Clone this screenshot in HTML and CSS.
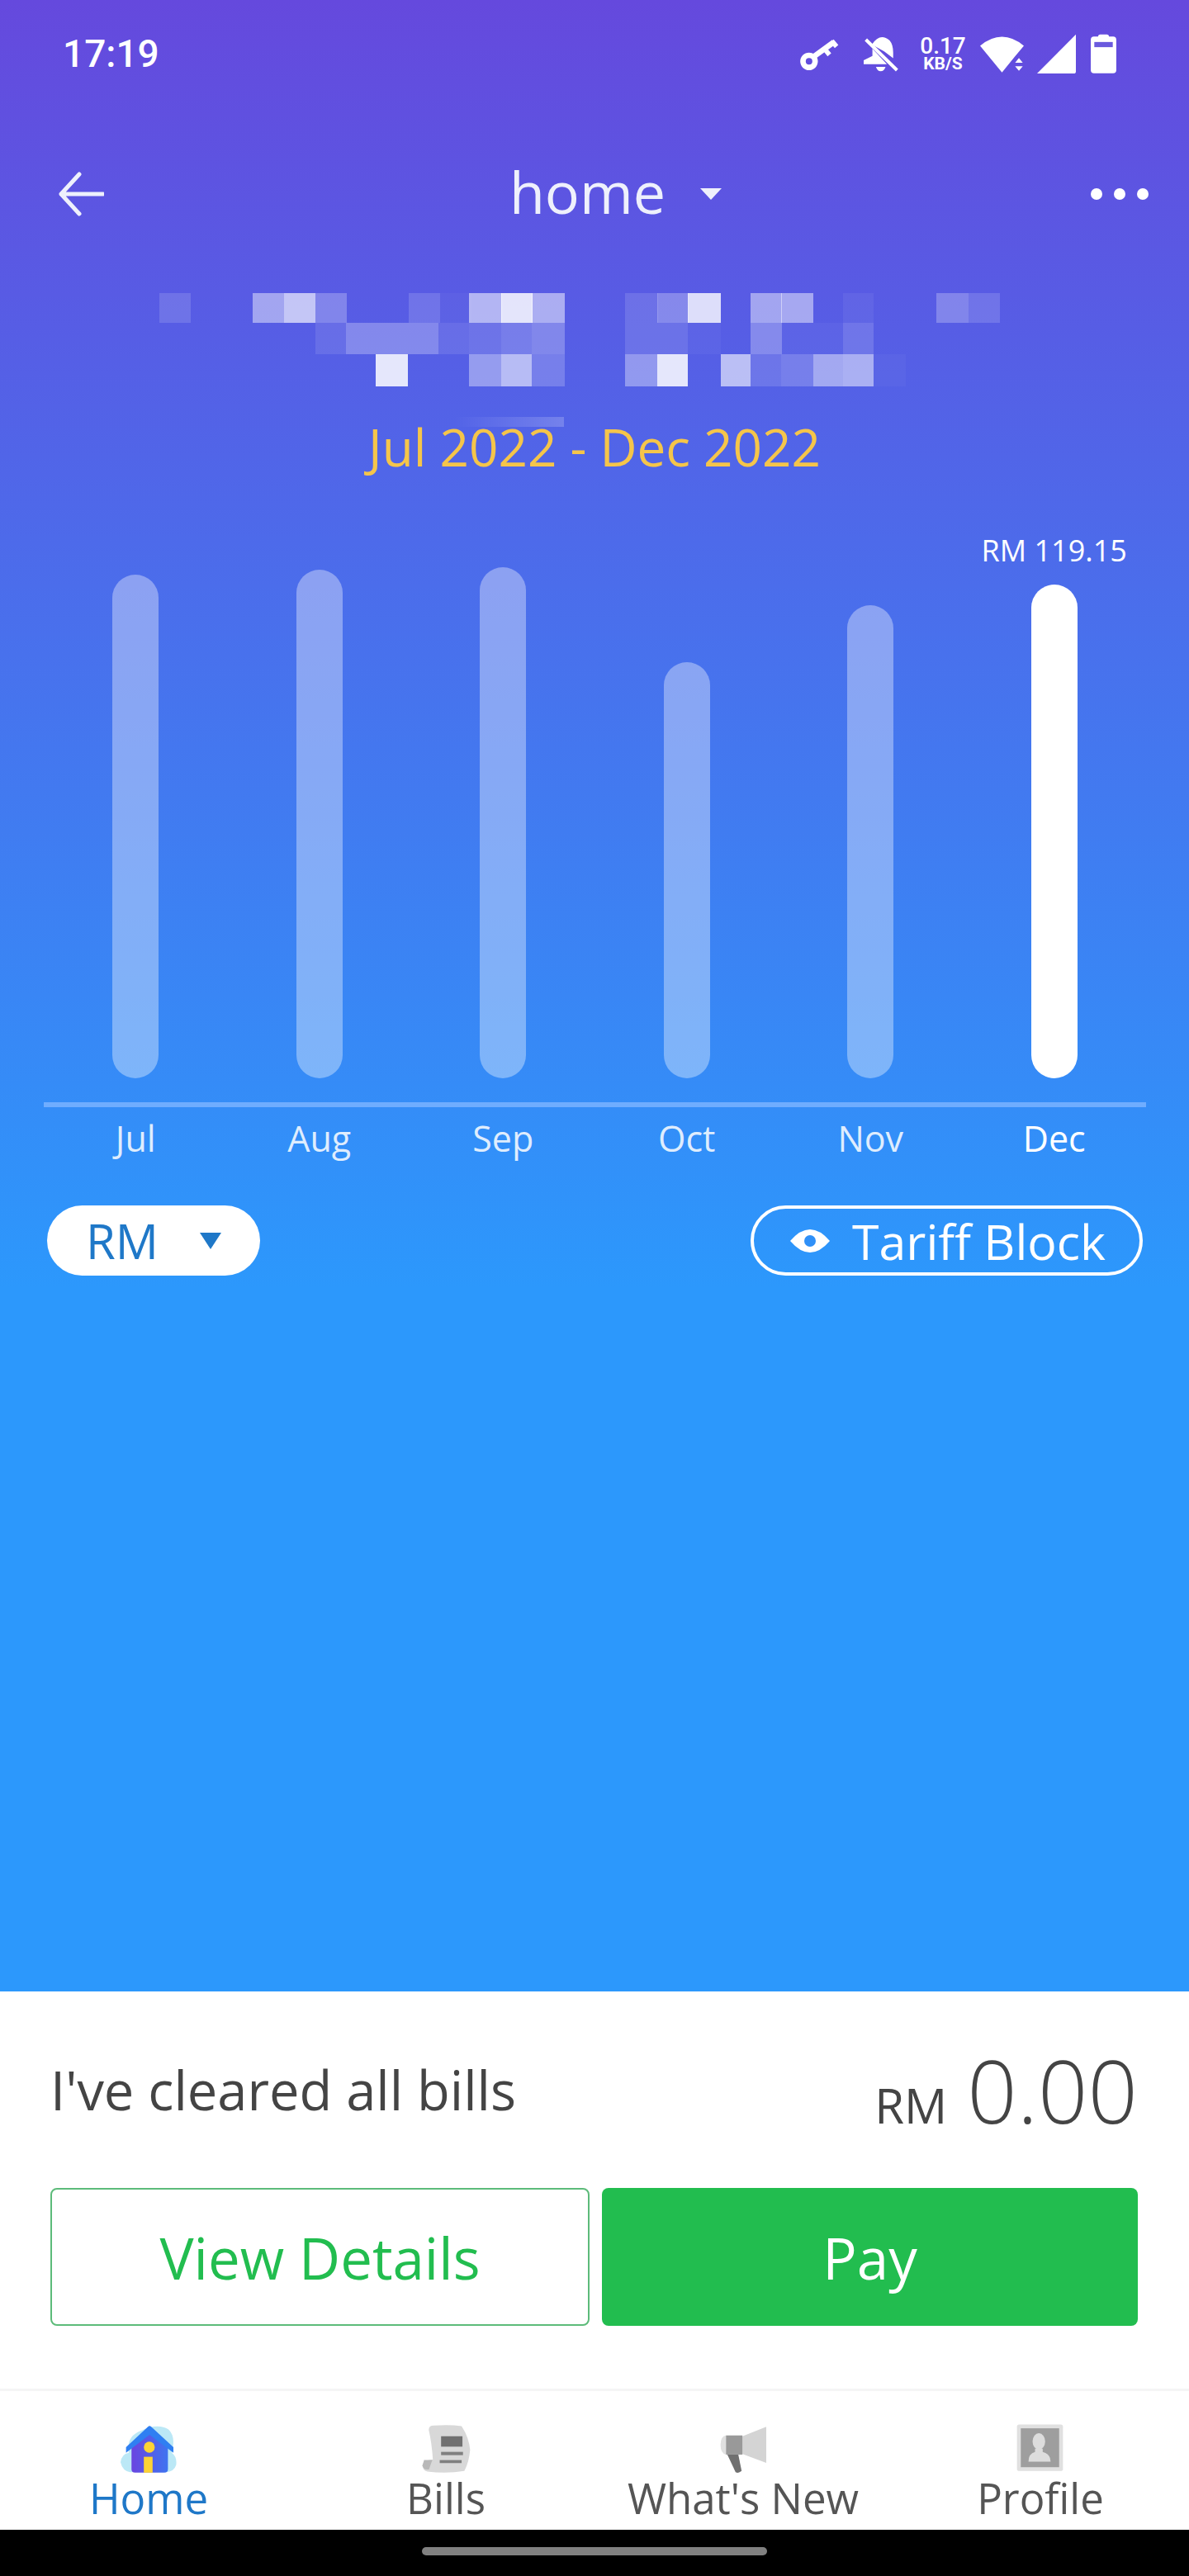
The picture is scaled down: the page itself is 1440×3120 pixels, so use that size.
FILE: index.html
```html
<!DOCTYPE html>
<html lang="en">
<head>
    <meta charset="UTF-8">
    <meta name="viewport" content="width=device-width, initial-scale=1.0">
    <title>Home usage</title>
    <link rel="stylesheet" href="styles.css">
</head>
<body>
    <div class="page">
        <div class="hero">
            <div class="status-bar">
                <span class="status-time">17:19</span>
                <div class="status-icons">
                    <svg class="icon-key" viewBox="90 70 140 120"><circle cx="122" cy="158" r="22" fill="none" stroke="#fff" stroke-width="20"/><path d="M140 140 L212 88" stroke="#fff" stroke-width="20"/><path d="M178 112 L196 134 M205 84 L222 104" stroke="#fff" stroke-width="17"/></svg>
                    <svg class="icon-bell" viewBox="320 70 130 130"><path d="M350 100 Q380 55 415 85 Q428 100 428 130 L428 150 L395 125 Z M352 115 L352 142 L320 158 L320 172 L405 172 Z" fill="#fff"/><path d="M365 182 H400 Q395 198 382 198 Q370 198 365 182 Z" fill="#fff"/><path d="M328 82 L442 194" stroke="#fff" stroke-width="12"/></svg>
                    <div class="net-speed"><span class="net-value">0.17</span><span class="net-unit">KB/S</span></div>
                    <svg class="icon-wifi" viewBox="740 60 160 138"><path d="M740 100 Q820 34 900 100 L864 143 L820 198 Z" fill="#fff"/><path d="M882 145 L896 162 H868 Z M868 175 H896 L882 192 Z" fill="#fff"/></svg>
                    <svg class="icon-signal" viewBox="948 60 140 143"><path d="M1088 62 V196 Q1088 203 1080 203 H948 Z" fill="#fff"/></svg>
                    <svg class="icon-battery" viewBox="1143 58 94 146"><path d="M1170 68 Q1170 60 1178 60 H1202 Q1210 60 1210 68 H1225 Q1237 68 1237 80 V192 Q1237 203 1225 203 H1155 Q1143 203 1143 192 V80 Q1143 68 1155 68 Z" fill="#fff"/><rect x="1156" y="88" width="68" height="19" fill="#6a5ade"/></svg>
                </div>
            </div>

            <div class="top-nav">
                <svg class="back-icon" viewBox="0 0 56 54"><path d="M26 3 L4 27 L26 51 M4 27 H55" fill="none" stroke="#eef0fc" stroke-width="5" stroke-linecap="round" stroke-linejoin="round"/></svg>
                <div class="top-title">
                    <span class="top-title-text">home</span>
                    <i class="caret"></i>
                </div>
                <div class="more-dots"><i></i><i></i><i></i></div>
            </div>

            <!-- account name is pixelated in the source -->
            <svg class="mosaic" width="1440" height="113" viewBox="0 0 1440 113">
                <g fill="#fff">
                    <rect x="193" y="0" width="38" height="36" fill-opacity=".14"/>
                    <rect x="306" y="0" width="38" height="36" fill-opacity=".45"/>
                    <rect x="344" y="0" width="38" height="36" fill-opacity=".65"/>
                    <rect x="382" y="0" width="38" height="36" fill-opacity=".25"/>
                    <rect x="495" y="0" width="38" height="36" fill-opacity=".15"/>
                    <rect x="533" y="0" width="38" height="36" fill-opacity=".03"/>
                    <rect x="568" y="0" width="40" height="36" fill-opacity=".55"/>
                    <rect x="607" y="0" width="38" height="36" fill-opacity=".84"/>
                    <rect x="644" y="0" width="40" height="36" fill-opacity=".5"/>
                    <rect x="757" y="0" width="40" height="36" fill-opacity=".13"/>
                    <rect x="796" y="0" width="38" height="36" fill-opacity=".28"/>
                    <rect x="833" y="0" width="40" height="36" fill-opacity=".8"/>
                    <rect x="909" y="0" width="38" height="36" fill-opacity=".45"/>
                    <rect x="946" y="0" width="39" height="36" fill-opacity=".47"/>
                    <rect x="1021" y="0" width="37" height="36" fill-opacity=".06"/>
                    <rect x="1134" y="0" width="39" height="36" fill-opacity=".25"/>
                    <rect x="1173" y="0" width="38" height="36" fill-opacity=".15"/>

                    <rect x="382" y="36" width="37" height="38" fill-opacity=".1"/>
                    <rect x="419" y="36" width="112" height="38" fill-opacity=".27"/>
                    <rect x="531" y="36" width="37" height="38" fill-opacity=".1"/>
                    <rect x="568" y="36" width="39" height="38" fill-opacity=".14"/>
                    <rect x="607" y="36" width="37" height="38" fill-opacity=".2"/>
                    <rect x="644" y="36" width="40" height="38" fill-opacity=".26"/>
                    <rect x="757" y="36" width="76" height="38" fill-opacity=".13"/>
                    <rect x="833" y="36" width="40" height="38" fill-opacity=".04"/>
                    <rect x="909" y="36" width="38" height="38" fill-opacity=".28"/>
                    <rect x="947" y="36" width="74" height="38" fill-opacity=".04"/>
                    <rect x="1021" y="36" width="37" height="38" fill-opacity=".15"/>

                    <rect x="455" y="74" width="39" height="39" fill-opacity=".85"/>
                    <rect x="568" y="74" width="39" height="39" fill-opacity=".38"/>
                    <rect x="607" y="74" width="37" height="39" fill-opacity=".58"/>
                    <rect x="644" y="74" width="40" height="39" fill-opacity=".2"/>
                    <rect x="757" y="74" width="39" height="39" fill-opacity=".36"/>
                    <rect x="796" y="74" width="37" height="39" fill-opacity=".85"/>
                    <rect x="873" y="74" width="36" height="39" fill-opacity=".6"/>
                    <rect x="909" y="74" width="37" height="39" fill-opacity=".14"/>
                    <rect x="946" y="74" width="39" height="39" fill-opacity=".2"/>
                    <rect x="985" y="74" width="36" height="39" fill-opacity=".46"/>
                    <rect x="1021" y="74" width="37" height="39" fill-opacity=".5"/>
                    <rect x="1058" y="74" width="39" height="39" fill-opacity=".03"/>
                </g>
            </svg>

            <div class="date-range">Jul 2022 - Dec 2022</div>

            <div class="chart">
                <div class="chart-col"><div class="bar" style="height: 610px"></div></div>
                <div class="chart-col"><div class="bar" style="height: 616px"></div></div>
                <div class="chart-col"><div class="bar" style="height: 619px"></div></div>
                <div class="chart-col"><div class="bar" style="height: 504px"></div></div>
                <div class="chart-col"><div class="bar" style="height: 573px"></div></div>
                <div class="chart-col">
                    <span class="bar-value">RM 119.15</span>
                    <div class="bar bar-active" style="height: 598px"></div>
                </div>
            </div>

            <div class="chart-labels">
                <span>Jul</span>
                <span>Aug</span>
                <span>Sep</span>
                <span>Oct</span>
                <span>Nov</span>
                <span class="label-active">Dec</span>
            </div>

            <div class="controls">
                <div class="unit-pill">
                    <span>RM</span>
                    <i class="unit-caret"></i>
                </div>
                <div class="tariff-pill">
                    <svg class="eye-icon" viewBox="0 0 48 30"><path d="M0 15 Q24 -13 48 15 Q24 43 0 15 Z" fill="#fff"/><circle cx="24" cy="15" r="7" fill="#2f90f8"/></svg>
                    <span>Tariff Block</span>
                </div>
            </div>
        </div>

        <div class="panel">
            <div class="balance-row">
                <span class="balance-label">I've cleared all bills</span>
                <div class="balance-total">
                    <span class="balance-unit">RM</span>
                    <span class="balance-amount">0.00</span>
                </div>
            </div>
            <div class="panel-buttons">
                <button class="btn btn-outline">View Details</button>
                <button class="btn btn-solid">Pay</button>
            </div>
        </div>

        <div class="bottom-nav">
            <div class="nav-item nav-active">
                <svg class="nav-icon" viewBox="75 38 205 180">
                    <defs>
                        <linearGradient id="house" x1="0" y1="0" x2="1" y2="0">
                            <stop offset="0" stop-color="#6a45e0"/>
                            <stop offset="1" stop-color="#3f74f0"/>
                        </linearGradient>
                    </defs>
                    <path d="M75 180 Q78 150 105 145 Q95 85 150 65 Q210 35 250 60 Q278 85 262 145 Q282 160 278 190 Q270 216 240 216 H110 Q82 212 75 180 Z" fill="#bbe8f6"/>
                    <path d="M115 120 L180 70 L248 120 V205 Q248 218 235 218 H128 Q115 218 115 205 Z" fill="url(#house)"/>
                    <path d="M95 125 L175 50 Q181 45 187 50 L268 125 V145 L181 80 L95 145 Z" fill="#2f7ff2"/>
                    <circle cx="180" cy="125" r="20" fill="#fdd335"/>
                    <rect x="160" y="160" width="32" height="58" fill="#fdd335"/>
                </svg>
                <span>Home</span>
            </div>
            <div class="nav-item">
                <svg class="nav-icon" viewBox="75 38 205 180">
                    <path d="M115 62 Q115 45 135 46 Q190 42 235 48 Q262 90 266 135 Q262 180 245 212 Q180 222 110 214 Q92 210 92 190 Q100 170 130 170 Q126 110 115 62 Z" fill="#d8d8d8"/>
                    <path d="M98 172 H128 L116 206 Q96 210 92 192 Z" fill="#b8b8b8"/>
                    <rect x="160" y="85" width="78" height="38" fill="#707070"/>
                    <rect x="160" y="142" width="80" height="12" fill="#808080"/>
                    <rect x="155" y="172" width="80" height="11" fill="#808080"/>
                </svg>
                <span>Bills</span>
            </div>
            <div class="nav-item">
                <svg class="nav-icon" viewBox="75 38 205 180">
                    <path d="M175 85 L262 50 V182 L175 150 Z" fill="#d4d4d4"/>
                    <path d="M115 82 Q95 85 95 116 Q95 148 115 152 Z" fill="#e0e0e0"/>
                    <rect x="115" y="82" width="60" height="70" fill="#999"/>
                    <path d="M120 152 H160 L172 212 Q160 222 150 216 Z" fill="#707070"/>
                </svg>
                <span>What's New</span>
            </div>
            <div class="nav-item">
                <svg class="nav-icon" viewBox="75 38 205 180">
                    <rect x="92" y="42" width="168" height="170" rx="8" fill="#e0e0e0"/>
                    <rect x="106" y="56" width="140" height="142" fill="#9e9e9e"/>
                    <ellipse cx="172" cy="104" rx="23" ry="30" fill="#ddd"/>
                    <path d="M158 130 H186 V142 Q214 148 215 178 H134 Q134 148 158 142 Z" fill="#ddd"/>
                </svg>
                <span>Profile</span>
            </div>
        </div>

        <div class="gesture-bar">
            <div class="gesture-handle"></div>
        </div>
    </div>
</body>
</html>
```

FILE: styles.css
```css
body {
    margin: 0;
    font-family: "Open Sans", "Noto Sans", sans-serif;
}

.page {
    width: 1440px;
    height: 3120px;
    display: flex;
    flex-direction: column;
}

.hero {
    height: 2412px;
    flex-shrink: 0;
    background: linear-gradient(180deg, #6549dd 0, #2c98fc 1560px);
    color: white;
}

/* status bar */
.status-bar {
    height: 130px;
    padding: 0 88px 0 76px;
    display: flex;
    align-items: center;
    justify-content: space-between;
    font-family: Roboto, sans-serif;
}

.status-time {
    font-size: 46px;
    font-weight: 500;
}

.status-icons {
    display: flex;
    align-items: center;
}

.icon-key {
    width: 47px;
    height: 40px;
}

.icon-bell {
    width: 43px;
    height: 43px;
    margin-left: 30px;
}

.net-speed {
    width: 50px;
    margin-left: 28px;
    display: flex;
    flex-direction: column;
    align-items: center;
}

.net-value {
    font-size: 28px;
    line-height: 24px;
    font-weight: 500;
}

.net-unit {
    font-size: 21px;
    line-height: 18px;
    font-weight: 700;
}

.icon-wifi {
    width: 53px;
    height: 46px;
    margin-left: 20px;
}

.icon-signal {
    width: 47px;
    height: 48px;
    margin-left: 16px;
}

.icon-battery {
    width: 31px;
    height: 48px;
    margin-left: 18px;
}

/* title row */
.top-nav {
    height: 110px;
    margin-top: 50px;
    padding: 0 49px 0 70px;
    display: flex;
    align-items: center;
    justify-content: space-between;
}

.back-icon {
    width: 56px;
    height: 54px;
}

.top-title {
    padding-left: 44px;
    display: flex;
    align-items: center;
    gap: 42px;
    font-size: 70px;
    line-height: 90px;
    color: #eef0fc;
}

.top-title-text {
    padding-bottom: 6px;
}

.caret {
    width: 0;
    height: 0;
    border-left: 13px solid transparent;
    border-right: 13px solid transparent;
    border-top: 14px solid #eef0fc;
}

.more-dots {
    display: flex;
    gap: 14px;
}

.more-dots i {
    width: 14px;
    height: 14px;
    border-radius: 50%;
    background-color: white;
}

.mosaic {
    display: block;
    margin-top: 65px;
}

.date-range {
    position: relative;
    margin-top: 38px;
    text-align: center;
    font-size: 62px;
    line-height: 70px;
    color: #f5c54a;
}

.date-range::before {
    content: "";
    position: absolute;
    left: 550px;
    top: -1px;
    width: 133px;
    height: 12px;
    background: linear-gradient(90deg, rgba(255,255,255,0), rgba(255,255,255,.2));
}

/* chart */
.chart {
    height: 666px;
    margin: 64px 52px 0 53px;
    padding-bottom: 29px;
    border-bottom: 6px solid #6fadff;
    display: grid;
    grid-template-columns: repeat(6, 1fr);
}

.chart-col {
    display: flex;
    flex-direction: column;
    align-items: center;
    justify-content: flex-end;
}

.bar {
    width: 56px;
    border-radius: 28px;
    background-color: rgba(255,255,255,.36);
}

.bar-active {
    background-color: white;
}

.bar-value {
    margin-bottom: 20px;
    font-size: 36px;
    line-height: 42px;
}

.chart-labels {
    margin: 10px 52px 0 53px;
    display: grid;
    grid-template-columns: repeat(6, 1fr);
    text-align: center;
    font-size: 43px;
    line-height: 56px;
    color: rgba(255,255,255,.85);
}

.label-active {
    color: white;
}

.controls {
    margin-top: 53px;
    padding: 0 56px 0 57px;
    display: flex;
    justify-content: space-between;
}

.unit-pill {
    width: 258px;
    height: 85px;
    box-sizing: border-box;
    padding: 0 47px 0 47px;
    border-radius: 43px;
    background-color: white;
    color: #1f78c8;
    font-size: 58px;
    display: flex;
    align-items: center;
    justify-content: space-between;
}

.unit-caret {
    width: 0;
    height: 0;
    border-left: 13px solid transparent;
    border-right: 13px solid transparent;
    border-top: 20px solid #1f78c8;
}

.tariff-pill {
    width: 475px;
    height: 85px;
    box-sizing: border-box;
    padding-left: 44px;
    border: 4px solid white;
    border-radius: 43px;
    font-size: 59px;
    display: flex;
    align-items: center;
    gap: 27px;
}

.eye-icon {
    width: 48px;
    height: 30px;
}

/* bottom panel */
.panel {
    height: 481px;
    flex-shrink: 0;
    box-sizing: border-box;
    padding: 0 62px 0 61px;
    background-color: white;
    color: #444;
}

.balance-row {
    height: 238px;
    display: flex;
    align-items: center;
    justify-content: space-between;
}

.balance-label {
    font-size: 65px;
}

.balance-total {
    display: flex;
    align-items: baseline;
    gap: 24px;
}

.balance-unit {
    font-size: 58px;
}

.balance-amount {
    font-size: 106px;
    font-weight: 300;
}

.panel-buttons {
    display: flex;
    gap: 15px;
}

.btn {
    flex: 1;
    height: 167px;
    border-radius: 8px;
    font-family: inherit;
    font-size: 69px;
}

.btn-outline {
    background-color: white;
    border: 2px solid #5dbb7a;
    color: #22bd4f;
}

.btn-solid {
    background-color: #22bd4f;
    border: none;
    color: white;
}

/* bottom navigation */
.bottom-nav {
    height: 171px;
    flex-shrink: 0;
    box-sizing: border-box;
    padding-top: 39px;
    border-top: 3px solid #f5f5f5;
    background-color: white;
    display: grid;
    grid-template-columns: repeat(4, 1fr);
}

.nav-item {
    display: flex;
    flex-direction: column;
    align-items: center;
    font-size: 51px;
    line-height: 60px;
    color: #555;
}

.nav-active {
    color: #1f78c8;
}

.nav-icon {
    width: 68px;
    height: 60px;
}

.gesture-bar {
    flex: 1;
    background-color: black;
    padding-top: 21px;
}

.gesture-handle {
    width: 418px;
    height: 10px;
    margin: 0 auto;
    border-radius: 5px;
    background-color: #808080;
}
```
